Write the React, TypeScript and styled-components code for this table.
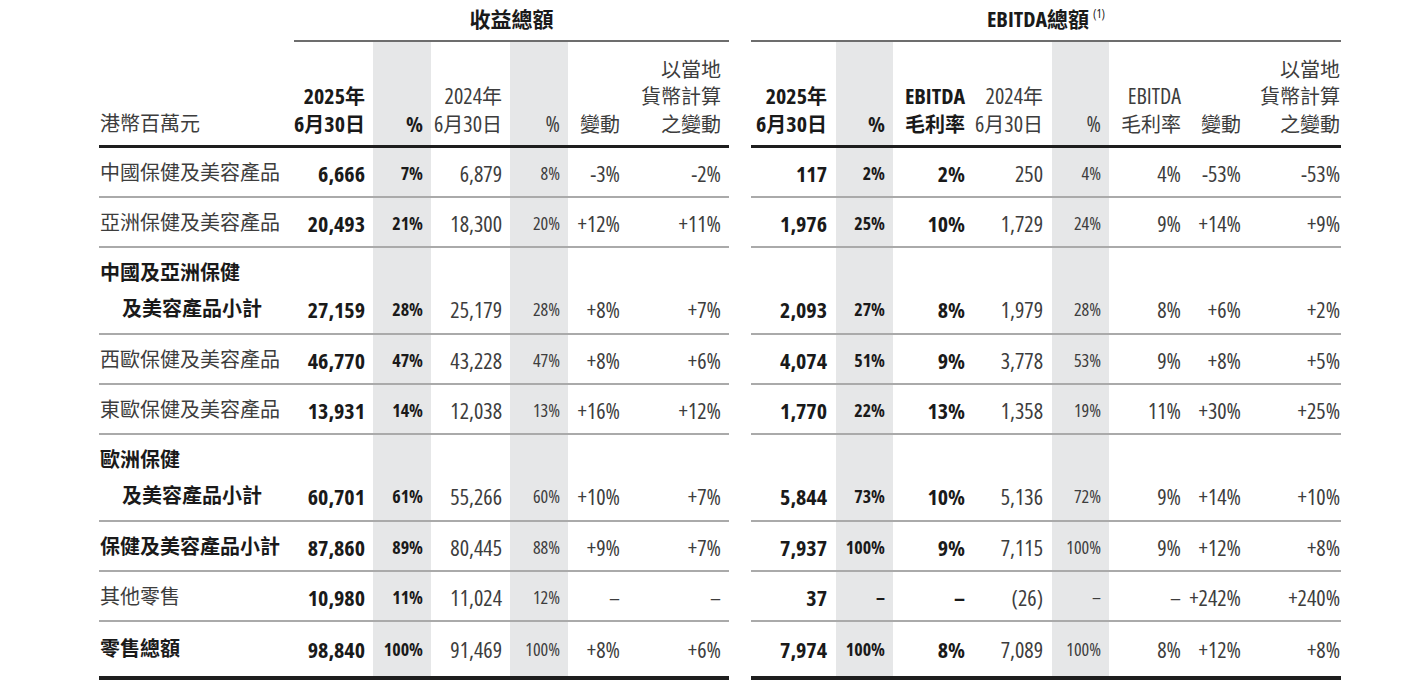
import React from "react";
import styled, { createGlobalStyle } from "styled-components";

const GlobalStyle = createGlobalStyle`
  html, body { margin: 0; padding: 0; background: #ffffff; }
`;

const Table = styled.table`
  border-collapse: separate;
  border-spacing: 0;
  table-layout: fixed;
  width: 1242px;
  margin-left: 99px;
  font-family: "Open Sans", "Noto Sans CJK TC", sans-serif;
  font-stretch: 75%;
  font-size: 22px;
  color: #3d3d3d;
`;

const Col = styled.col<{ $w: number }>`
  width: ${(p) => p.$w}px;
`;

const Han = styled.span<{ $size?: number }>`
  font-family: "Noto Sans CJK TC", sans-serif;
  font-stretch: normal;
  font-size: ${(p) => p.$size ?? 20}px;
`;

const GroupTitle = styled.th`
  padding: 0 0 4px 0;
  line-height: 36px;
  font-size: 22px;
  font-weight: 700;
  color: #1a1a1a;
  text-align: center;
  white-space: nowrap;
`;

const Sup = styled.sup`
  font-size: 12px;
  font-weight: 400;
  vertical-align: 9px;
  line-height: 0;
  margin-left: 4px;
`;

const Blank = styled.th`
  padding: 0;
`;

const LabelHead = styled.th`
  padding: 0 0 8px 1px;
  vertical-align: bottom;
  text-align: left;
  font-weight: 400;
  font-size: 20px;
  line-height: 27.5px;
  border-bottom: 3px solid #1e1e1e;
`;

const HeadCell = styled.th<{ $bold?: boolean; $shade?: boolean; $pr: number }>`
  padding: 12.5px ${(p) => p.$pr}px 8px 0;
  vertical-align: bottom;
  text-align: right;
  line-height: 27.5px;
  white-space: nowrap;
  font-weight: ${(p) => (p.$bold ? 700 : 400)};
  color: ${(p) => (p.$bold ? "#1a1a1a" : "#3d3d3d")};
  background: ${(p) => (p.$shade ? "#e6e7e8" : "transparent")};
  border-top: 2px solid #6d6d6d;
  border-bottom: 3px solid #1e1e1e;
`;

const HeadSpacer = styled.th`
  padding: 0;
`;

type RowKind = "single" | "double" | "last";

const Row = styled.tr<{ $kind: RowKind }>`
  & > td {
    padding-top: ${(p) => (p.$kind === "last" ? 9 : 7)}px;
    padding-bottom: ${(p) => (p.$kind === "last" ? 9 : p.$kind === "double" ? 6 : 5)}px;
    border-bottom: ${(p) => (p.$kind === "last" ? "4px solid #1e1e1e" : "2px solid #aaaaaa")};
    line-height: 36px;
    vertical-align: bottom;
  }
`;

const LabelCell = styled.td<{ $bold?: boolean }>`
  padding-left: 1px;
  padding-right: 0;
  text-align: left;
  white-space: nowrap;
  font-size: 20px;
  font-weight: ${(p) => (p.$bold ? 700 : 400)};
  color: ${(p) => (p.$bold ? "#1a1a1a" : "#3d3d3d")};
`;

const LabelLine = styled.div<{ $indent?: boolean }>`
  padding-left: ${(p) => (p.$indent ? 22 : 0)}px;
`;

const NumCell = styled.td<{ $bold?: boolean; $shade?: boolean; $small?: boolean; $pr: number }>`
  padding-left: 0;
  padding-right: ${(p) => p.$pr}px;
  text-align: right;
  white-space: nowrap;
  font-size: ${(p) => (p.$small ? 18 : 22)}px;
  font-weight: ${(p) => (p.$bold ? 700 : 400)};
  color: ${(p) => (p.$bold ? "#1a1a1a" : "#3d3d3d")};
  background: ${(p) => (p.$shade ? "#e6e7e8" : "transparent")};
`;

const Spacer = styled.td`
  && {
    padding: 0;
    border: none;
  }
`;

const HAN_RE = /([\u3000-\u9fff\uff00-\uffef]+)/;
const HAN_TEST = /^[\u3000-\u9fff\uff00-\uffef]+$/;

const mixed = (s: string, size?: number) =>
  s.split(HAN_RE).filter(Boolean).map((part, i) =>
    HAN_TEST.test(part) ? (
      <Han key={i} $size={size}>
        {part}
      </Han>
    ) : (
      <React.Fragment key={i}>{part}</React.Fragment>
    )
  );

type ColSpec = { w: number; bold?: boolean; shade?: boolean; small?: boolean; pr: number; head: string[] };

const revCols: ColSpec[] = [
  { w: 79, bold: true, pr: 8, head: ["2025年", "6月30日"] },
  { w: 58, bold: true, shade: true, small: true, pr: 8, head: ["%"] },
  { w: 79, pr: 8, head: ["2024年", "6月30日"] },
  { w: 58, shade: true, small: true, pr: 8, head: ["%"] },
  { w: 60, pr: 8, head: ["變動"] },
  { w: 101, pr: 8, head: ["以當地", "貨幣計算", "之變動"] },
];

const ebCols: ColSpec[] = [
  { w: 85, bold: true, pr: 9, head: ["2025年", "6月30日"] },
  { w: 57, bold: true, shade: true, small: true, pr: 8, head: ["%"] },
  { w: 79, bold: true, pr: 7, head: ["EBITDA", "毛利率"] },
  { w: 80, pr: 9, head: ["2024年", "6月30日"] },
  { w: 57, shade: true, small: true, pr: 8, head: ["%"] },
  { w: 79, pr: 7, head: ["EBITDA", "毛利率"] },
  { w: 60, pr: 7, head: ["變動"] },
  { w: 93, pr: 1, head: ["以當地", "貨幣計算", "之變動"] },
];

type DataRow = { label: string[]; bold?: boolean; r: string[]; e: string[] };

const rows: DataRow[] = [
  { label: ["中國保健及美容產品"], r: ["6,666", "7%", "6,879", "8%", "-3%", "-2%"], e: ["117", "2%", "2%", "250", "4%", "4%", "-53%", "-53%"] },
  { label: ["亞洲保健及美容產品"], r: ["20,493", "21%", "18,300", "20%", "+12%", "+11%"], e: ["1,976", "25%", "10%", "1,729", "24%", "9%", "+14%", "+9%"] },
  { label: ["中國及亞洲保健", "及美容產品小計"], bold: true, r: ["27,159", "28%", "25,179", "28%", "+8%", "+7%"], e: ["2,093", "27%", "8%", "1,979", "28%", "8%", "+6%", "+2%"] },
  { label: ["西歐保健及美容產品"], r: ["46,770", "47%", "43,228", "47%", "+8%", "+6%"], e: ["4,074", "51%", "9%", "3,778", "53%", "9%", "+8%", "+5%"] },
  { label: ["東歐保健及美容產品"], r: ["13,931", "14%", "12,038", "13%", "+16%", "+12%"], e: ["1,770", "22%", "13%", "1,358", "19%", "11%", "+30%", "+25%"] },
  { label: ["歐洲保健", "及美容產品小計"], bold: true, r: ["60,701", "61%", "55,266", "60%", "+10%", "+7%"], e: ["5,844", "73%", "10%", "5,136", "72%", "9%", "+14%", "+10%"] },
  { label: ["保健及美容產品小計"], bold: true, r: ["87,860", "89%", "80,445", "88%", "+9%", "+7%"], e: ["7,937", "100%", "9%", "7,115", "100%", "9%", "+12%", "+8%"] },
  { label: ["其他零售"], r: ["10,980", "11%", "11,024", "12%", "–", "–"], e: ["37", "–", "–", "(26)", "–", "–", "+242%", "+240%"] },
  { label: ["零售總額"], bold: true, r: ["98,840", "100%", "91,469", "100%", "+8%", "+6%"], e: ["7,974", "100%", "8%", "7,089", "100%", "8%", "+12%", "+8%"] },
];

const renderHead = (c: ColSpec, i: number) => (
  <HeadCell key={i} $bold={c.bold} $shade={c.shade} $pr={c.pr}>
    {c.head.map((line, j) => (
      <React.Fragment key={j}>
        {j > 0 && <br />}
        {mixed(line)}
      </React.Fragment>
    ))}
  </HeadCell>
);

const renderNums = (cols: ColSpec[], vals: string[]) =>
  vals.map((v, i) => (
    <NumCell key={i} $bold={cols[i].bold} $shade={cols[i].shade} $small={cols[i].small} $pr={cols[i].pr}>
      {v}
    </NumCell>
  ));

export default function App() {
  return (
    <>
      <GlobalStyle />
      <Table>
        <colgroup>
          <Col $w={195} />
          {revCols.map((c, i) => (
            <Col key={`r${i}`} $w={c.w} />
          ))}
          <Col $w={22} />
          {ebCols.map((c, i) => (
            <Col key={`e${i}`} $w={c.w} />
          ))}
        </colgroup>
        <thead>
          <tr>
            <Blank />
            <GroupTitle colSpan={6}>{mixed("收益總額", 21)}</GroupTitle>
            <Blank />
            <GroupTitle colSpan={8}>
              {mixed("EBITDA總額", 21)}
              <Sup>(1)</Sup>
            </GroupTitle>
          </tr>
          <tr>
            <LabelHead>港幣百萬元</LabelHead>
            {revCols.map(renderHead)}
            <HeadSpacer />
            {ebCols.map(renderHead)}
          </tr>
        </thead>
        <tbody>
          {rows.map((row, idx) => {
            const kind: RowKind = idx === rows.length - 1 ? "last" : row.label.length > 1 ? "double" : "single";
            return (
              <Row key={idx} $kind={kind}>
                <LabelCell $bold={row.bold}>
                  {row.label.map((l, j) => (
                    <LabelLine key={j} $indent={j > 0}>
                      {l}
                    </LabelLine>
                  ))}
                </LabelCell>
                {renderNums(revCols, row.r)}
                <Spacer />
                {renderNums(ebCols, row.e)}
              </Row>
            );
          })}
        </tbody>
      </Table>
    </>
  );
}
